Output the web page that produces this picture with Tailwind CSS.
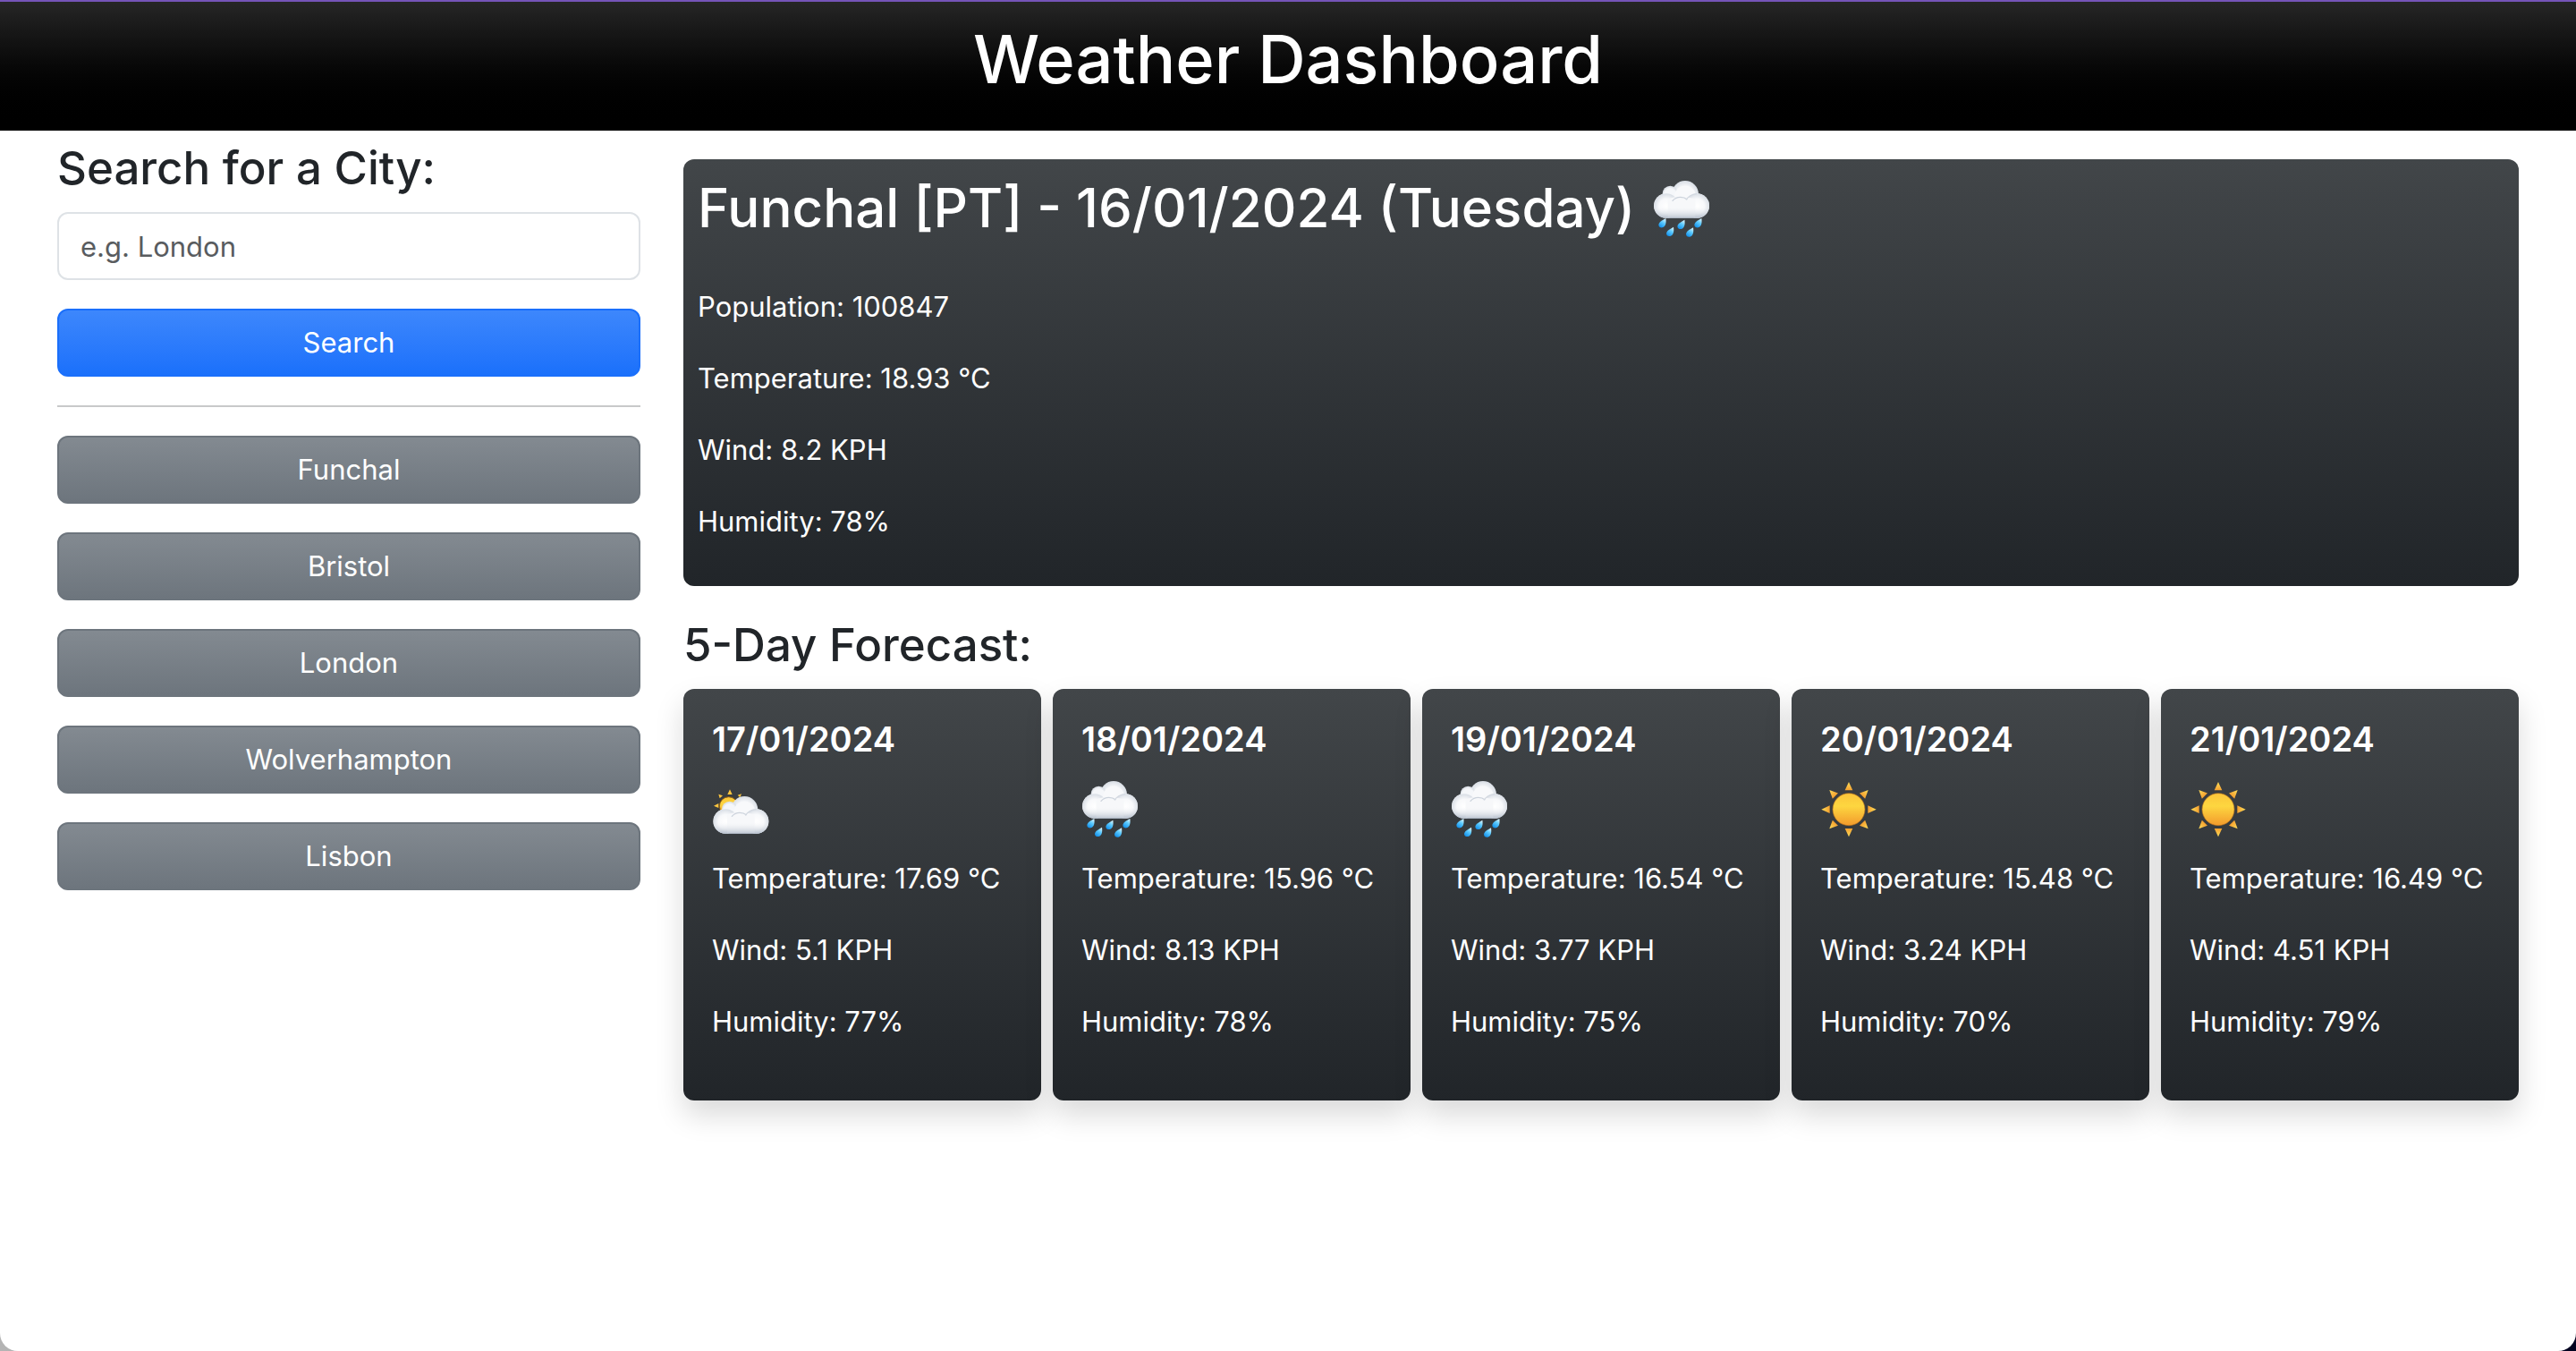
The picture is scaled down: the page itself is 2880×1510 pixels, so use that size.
<!DOCTYPE html>
<html lang="en" class="bg-linear-to-r from-[#b4b4b4] to-[#02021f]">
<head>
<meta charset="utf-8">
<meta name="viewport" content="width=device-width, initial-scale=1">
<title>Weather Dashboard</title>
<script src="https://cdn.jsdelivr.net/npm/@tailwindcss/browser@4"></script>
</head>
<body class="min-h-screen rounded-b-[20px] bg-white font-['Inter',sans-serif] text-[31px] leading-[48px] text-[#212529]">

<!-- Weather symbols shared by the cards -->
<svg class="absolute size-0" aria-hidden="true">
  <defs>
    <linearGradient id="cloudFill" x1="0" y1="0" x2="0" y2="1">
      <stop offset="0" stop-color="#f4f6f9"/><stop offset=".6" stop-color="#f1f3f6"/><stop offset="1" stop-color="#b9c2cf"/>
    </linearGradient>
    <radialGradient id="puff" cx=".5" cy=".52" r=".5">
      <stop offset="0" stop-color="#fff"/><stop offset=".6" stop-color="#f8f9fb"/><stop offset="1" stop-color="#dbe0e7"/>
    </radialGradient>
    <linearGradient id="base" x1="0" y1="0" x2="0" y2="1">
      <stop offset="0" stop-color="#fff" stop-opacity="0"/><stop offset="1" stop-color="#aab5c4" stop-opacity=".75"/>
    </linearGradient>
    <linearGradient id="dropFill" x1=".8" y1="0" x2=".3" y2="1">
      <stop offset="0" stop-color="#dff6ff"/><stop offset=".45" stop-color="#5ccaff"/><stop offset="1" stop-color="#1290ea"/>
    </linearGradient>
    <linearGradient id="sunFill" x1="0" y1="0" x2="0" y2="1">
      <stop offset="0" stop-color="#fbc53a"/><stop offset=".4" stop-color="#fdd640"/><stop offset="1" stop-color="#f29a2c"/>
    </linearGradient>
    <linearGradient id="rayFill" x1="0" y1="0" x2="0" y2="1">
      <stop offset="0" stop-color="#ffdf5a"/><stop offset="1" stop-color="#f4a02f"/>
    </linearGradient>
    <g id="cloudShape">
      <circle cx="108" cy="48" r="45" fill="url(#puff)"/>
      <circle cx="58" cy="46" r="26" fill="url(#puff)"/>
      <rect x="3" y="46" width="186" height="82" rx="41" fill="url(#cloudFill)"/>
      <circle cx="58" cy="50" r="22" fill="#f5f7fa"/>
      <circle cx="108" cy="56" r="36" fill="#f8f9fb"/>
      <circle cx="45" cy="87" r="41" fill="url(#puff)"/>
      <circle cx="148" cy="87" r="41" fill="url(#puff)"/>
      <path d="M50 64q40-16 92 0v63H50z" fill="#f7f8fa"/>
      <path d="M66 70q10-12 26-12 14 0 22 7" fill="none" stroke="#ccd3dc" stroke-width="4" stroke-linecap="round"/>
      <path d="M112 66q10-16 34-19" fill="none" stroke="#d3d9e1" stroke-width="4" stroke-linecap="round"/>
      <path d="M3 87h186a41 41 0 0 1-41 41H44a41 41 0 0 1-41-41z" fill="url(#base)"/>
    </g>
    <path id="drop" d="M12-16C14-4 13 12 1 15c-9 2-15-5-12-13C-8-6 2-9 12-16z" fill="url(#dropFill)"/>
    <path id="ray" d="M0-92 13-64H-13z" fill="url(#rayFill)"/>
  </defs>
  <symbol id="rain" viewBox="0 0 192 192">
    <use href="#cloudShape"/>
    <use href="#drop" x="31" y="145"/><use href="#drop" x="57" y="174"/><use href="#drop" x="94" y="150"/><use href="#drop" x="123" y="176"/><use href="#drop" x="151" y="145"/>
  </symbol>
  <symbol id="partly" viewBox="0 0 192 192">
    <circle cx="56" cy="87" r="31" fill="url(#sunFill)" stroke="#8a5a12" stroke-width="3"/>
    <path d="M60 31l8 17H52zM22 47l14 5-10 9zM99 46l-13 4 8 8zM6 86l16-8v15z" fill="#fdc53e"/>
    <use href="#cloudShape" x="1" y="51"/>
  </symbol>
  <symbol id="sun" viewBox="0 0 192 192">
    <g transform="translate(96 98)">
      <use href="#ray"/><use href="#ray" transform="rotate(45)"/><use href="#ray" transform="rotate(90)"/><use href="#ray" transform="rotate(135)"/>
      <use href="#ray" transform="rotate(180)"/><use href="#ray" transform="rotate(225)"/><use href="#ray" transform="rotate(270)"/><use href="#ray" transform="rotate(315)"/>
      <circle r="54" fill="url(#sunFill)" stroke="#b9741d" stroke-width="2"/>
    </g>
  </symbol>
</svg>

<header class="border-t-2 border-[#7554b8] bg-linear-to-b from-[#262626] to-black px-4 pt-4 pb-8 text-center text-white">
  <h1 class="text-[74px] leading-[96px] font-medium">Weather Dashboard</h1>
</header>

<div class="grid grid-cols-1 gap-12 px-16 lg:grid-cols-[652fr_2052fr]">
  <aside class="pt-2">
    <form onsubmit="return false">
      <label for="city" class="block text-[51px] leading-[67px] font-medium">Search for a City:</label>
      <input id="city" type="text" placeholder="e.g. London" class="mt-4 block h-[76px] w-full rounded-xl border-2 border-[#dee2e6] bg-white px-6 placeholder:text-[#595c5f]">
      <button type="submit" class="mt-8 block h-[76px] w-full rounded-xl border-2 border-[#1a6ffb] bg-linear-to-b from-[#3d87fc] to-[#1a70fb] text-white">Search</button>
    </form>
    <hr class="my-8 border-t-2 border-[#c8c9ca]">
    <div class="flex flex-col gap-8">
      <button type="button" class="h-[76px] w-full rounded-xl border-2 border-[#6d757d] bg-linear-to-b from-[#838a91] to-[#6d757d] text-white">Funchal</button>
      <button type="button" class="h-[76px] w-full rounded-xl border-2 border-[#6d757d] bg-linear-to-b from-[#838a91] to-[#6d757d] text-white">Bristol</button>
      <button type="button" class="h-[76px] w-full rounded-xl border-2 border-[#6d757d] bg-linear-to-b from-[#838a91] to-[#6d757d] text-white">London</button>
      <button type="button" class="h-[76px] w-full rounded-xl border-2 border-[#6d757d] bg-linear-to-b from-[#838a91] to-[#6d757d] text-white">Wolverhampton</button>
      <button type="button" class="h-[76px] w-full rounded-xl border-2 border-[#6d757d] bg-linear-to-b from-[#838a91] to-[#6d757d] text-white">Lisbon</button>
    </div>
  </aside>

  <main class="pt-8">
    <section class="rounded-xl bg-linear-to-b from-[#424649] to-[#212529] px-4 pt-4 pb-12 text-white">
      <h2 class="mb-12 flex items-center gap-5 text-[60px] leading-[77px] font-medium">Funchal [PT] - 16/01/2024 (Tuesday)
        <svg class="size-16 shrink-0" role="img" aria-label="Rain"><use href="#rain"/></svg>
      </h2>
      <div class="flex flex-col gap-8">
        <p>Population: 100847</p>
        <p>Temperature: 18.93 °C</p>
        <p>Wind: 8.2 KPH</p>
        <p>Humidity: 78%</p>
      </div>
    </section>

    <h3 class="mt-8 mb-4 text-[51px] leading-[67px] font-medium">5-Day Forecast:</h3>
    <div class="grid grid-cols-1 gap-[13px] sm:grid-cols-2 lg:grid-cols-5">
      <article class="rounded-xl bg-linear-to-b from-[#424649] to-[#212529] px-8 pt-8 pb-16 text-white shadow-[0_16px_32px_rgba(0,0,0,0.15)]">
        <h4 class="text-[38px] leading-[48px] font-semibold">17/01/2024</h4>
        <svg class="my-[22px] size-16" role="img" aria-label="Partly cloudy"><use href="#partly"/></svg>
        <div class="flex flex-col gap-8"><p>Temperature: 17.69 °C</p><p>Wind: 5.1 KPH</p><p>Humidity: 77%</p></div>
      </article>
      <article class="rounded-xl bg-linear-to-b from-[#424649] to-[#212529] px-8 pt-8 pb-16 text-white shadow-[0_16px_32px_rgba(0,0,0,0.15)]">
        <h4 class="text-[38px] leading-[48px] font-semibold">18/01/2024</h4>
        <svg class="my-[22px] size-16" role="img" aria-label="Rain"><use href="#rain"/></svg>
        <div class="flex flex-col gap-8"><p>Temperature: 15.96 °C</p><p>Wind: 8.13 KPH</p><p>Humidity: 78%</p></div>
      </article>
      <article class="rounded-xl bg-linear-to-b from-[#424649] to-[#212529] px-8 pt-8 pb-16 text-white shadow-[0_16px_32px_rgba(0,0,0,0.15)]">
        <h4 class="text-[38px] leading-[48px] font-semibold">19/01/2024</h4>
        <svg class="my-[22px] size-16" role="img" aria-label="Rain"><use href="#rain"/></svg>
        <div class="flex flex-col gap-8"><p>Temperature: 16.54 °C</p><p>Wind: 3.77 KPH</p><p>Humidity: 75%</p></div>
      </article>
      <article class="rounded-xl bg-linear-to-b from-[#424649] to-[#212529] px-8 pt-8 pb-16 text-white shadow-[0_16px_32px_rgba(0,0,0,0.15)]">
        <h4 class="text-[38px] leading-[48px] font-semibold">20/01/2024</h4>
        <svg class="my-[22px] size-16" role="img" aria-label="Sunny"><use href="#sun"/></svg>
        <div class="flex flex-col gap-8"><p>Temperature: 15.48 °C</p><p>Wind: 3.24 KPH</p><p>Humidity: 70%</p></div>
      </article>
      <article class="rounded-xl bg-linear-to-b from-[#424649] to-[#212529] px-8 pt-8 pb-16 text-white shadow-[0_16px_32px_rgba(0,0,0,0.15)]">
        <h4 class="text-[38px] leading-[48px] font-semibold">21/01/2024</h4>
        <svg class="my-[22px] size-16" role="img" aria-label="Sunny"><use href="#sun"/></svg>
        <div class="flex flex-col gap-8"><p>Temperature: 16.49 °C</p><p>Wind: 4.51 KPH</p><p>Humidity: 79%</p></div>
      </article>
    </div>
  </main>
</div>
</body>
</html>
